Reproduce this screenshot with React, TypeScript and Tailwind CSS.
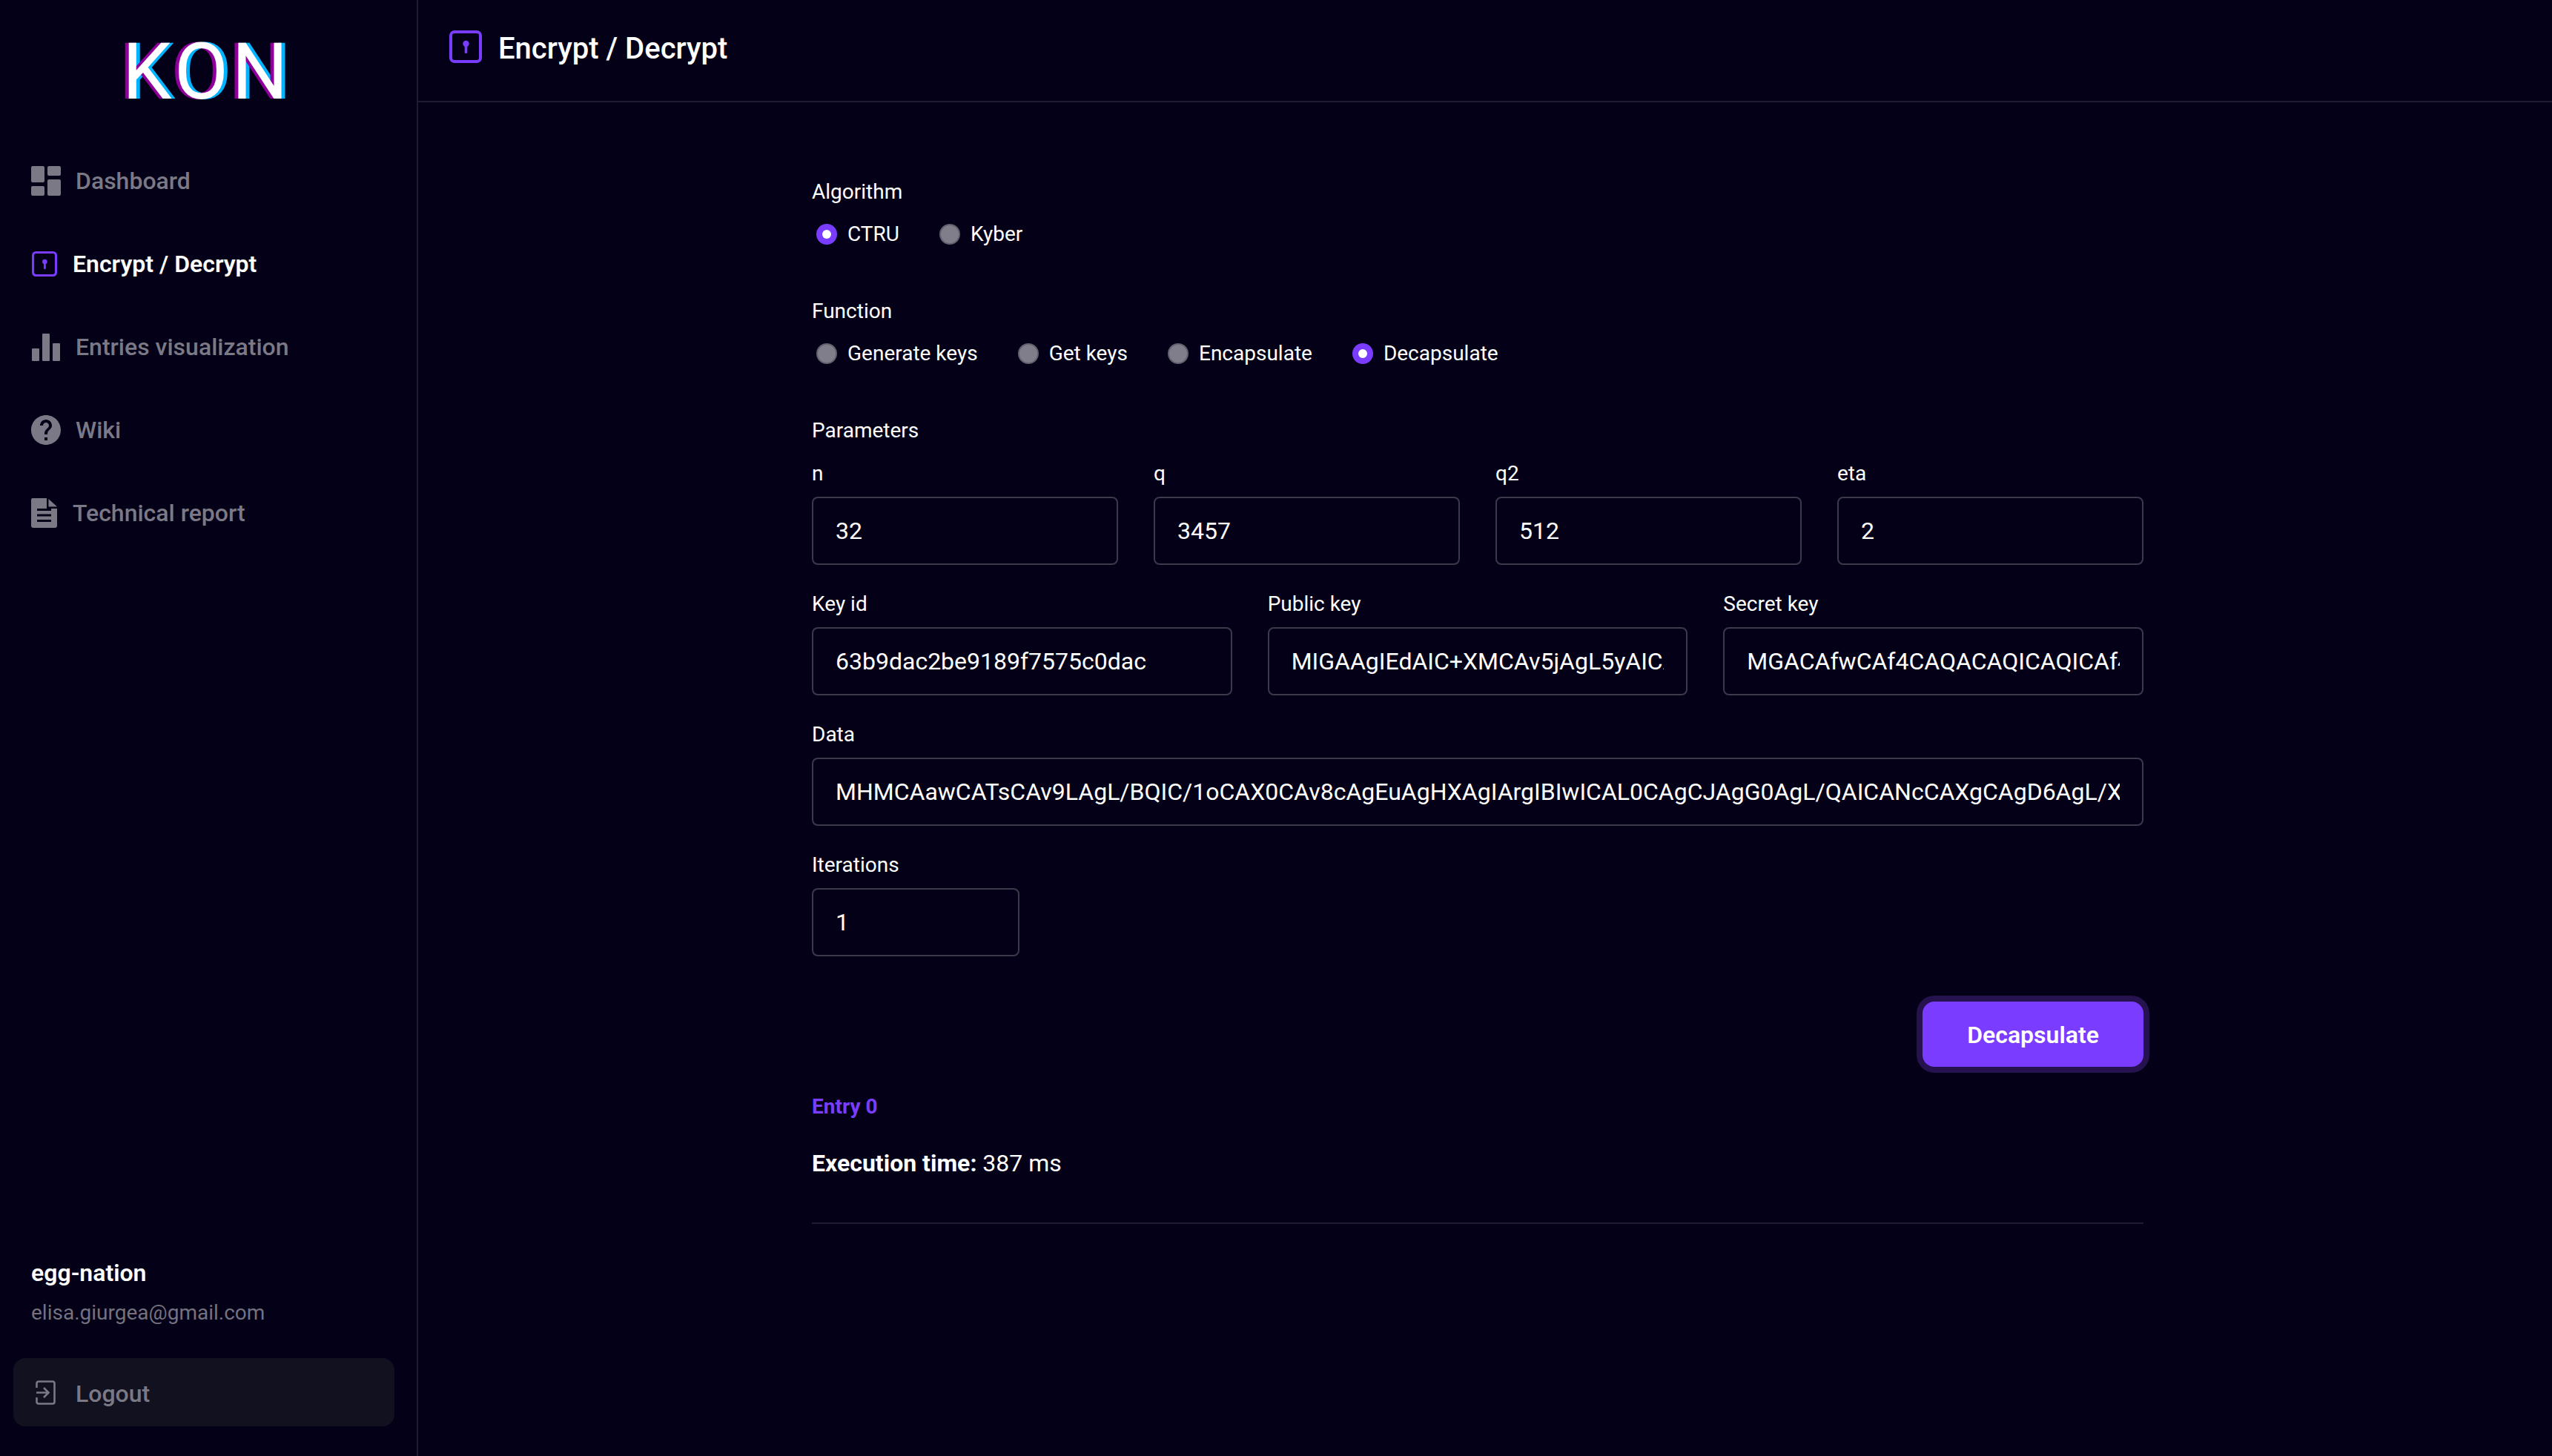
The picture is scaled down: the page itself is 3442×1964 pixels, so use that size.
const navItems = [
  { label: "Dashboard", icon: <DashboardIcon />, gap: "gap-[20px]", active: false },
  { label: "Encrypt / Decrypt", icon: <KeyholeIcon className="ml-px size-[34px]" />, gap: "gap-[21px]", active: true },
  { label: "Entries visualization", icon: <BarsIcon />, gap: "gap-[21px]", active: false },
  { label: "Wiki", icon: <HelpIcon />, gap: "gap-[20px]", active: false },
  { label: "Technical report", icon: <DocIcon />, gap: "gap-[21px]", active: false },
];

function DashboardIcon() {
  return (
    <svg viewBox="0 0 40 40" className="size-[40px] fill-[#7b7986]">
      <rect x="0" y="0" width="18" height="22" rx="2" />
      <rect x="0" y="27" width="18" height="13" rx="2" />
      <rect x="22" y="0" width="18" height="13" rx="2" />
      <rect x="22" y="18" width="18" height="22" rx="2" />
    </svg>
  );
}

function KeyholeIcon({ className }: { className: string }) {
  return (
    <svg viewBox="0 0 44 44" className={className}>
      <rect x="2" y="2" width="40" height="40" rx="5" fill="none" stroke="#7a3dff" strokeWidth="4" />
      <circle cx="22.5" cy="18" r="4.2" fill="#7a3dff" />
      <line x1="22.5" y1="18" x2="22.5" y2="29.5" stroke="#7a3dff" strokeWidth="3.6" strokeLinecap="round" />
    </svg>
  );
}

function BarsIcon() {
  return (
    <svg viewBox="0 0 38 37" className="ml-px h-[37px] w-[38px] fill-[#7b7986]">
      <rect x="0" y="20" width="10" height="17" rx="1" />
      <rect x="14" y="0" width="10" height="37" rx="1" />
      <rect x="28" y="13" width="10" height="24" rx="1" />
    </svg>
  );
}

function HelpIcon() {
  return (
    <svg viewBox="2 2 20 20" className="size-[40px] fill-[#7b7986]">
      <path d="M12 2C6.48 2 2 6.48 2 12s4.48 10 10 10 10-4.48 10-10S17.52 2 12 2zm1 17h-2v-2h2v2zm2.07-7.75l-.9.92C13.45 12.9 13 13.5 13 15h-2v-.5c0-1.1.45-2.1 1.17-2.83l1.24-1.26c.37-.36.59-.86.59-1.41 0-1.1-.9-2-2-2s-2 .9-2 2H8c0-2.21 1.79-4 4-4s4 1.79 4 4c0 .88-.36 1.68-.93 2.25z" />
    </svg>
  );
}

function DocIcon() {
  return (
    <svg viewBox="0 0 35 40" className="h-[40px] w-[35px] fill-[#7b7986]">
      <path
        fillRule="evenodd"
        d="M2 0H21V14H35V37a3 3 0 0 1-3 3H3a3 3 0 0 1-3-3V2a2 2 0 0 1 2-2zM8 14V17H27V14zM8 21.5V24.5H27V21.5zM8 29V32H27V29z"
      />
      <path d="M23.5 1L35 11.5H23.5z" />
    </svg>
  );
}

function LogoutIcon() {
  return (
    <svg viewBox="0 0 27 33" className="h-[33px] w-[27px] fill-none stroke-[#7b7986]" strokeWidth="2.6">
      <path d="M1.5 10V4a2.5 2.5 0 0 1 2.5-2.5H23a2.5 2.5 0 0 1 2.5 2.5V29a2.5 2.5 0 0 1-2.5 2.5H4A2.5 2.5 0 0 1 1.5 29V23" />
      <path d="M1 16.5H17M11 10l6.5 6.5L11 23" />
    </svg>
  );
}

function Radio({ label, checked }: { label: string; checked?: boolean }) {
  return (
    <div className="flex items-center gap-[14px]">
      {checked ? (
        <span className="flex size-[28px] items-center justify-center rounded-full bg-[#7a3dff]">
          <span className="size-[12px] rounded-full bg-white" />
        </span>
      ) : (
        <span className="size-[28px] rounded-full border-2 border-[#62616e] bg-[#7f7e8a]" />
      )}
      <span className="text-[28px] leading-[40px]">{label}</span>
    </div>
  );
}

function Field({ label, value, className }: { label: string; value: string; className?: string }) {
  return (
    <div className={className}>
      <label className="block text-[28px] leading-[44px]">{label}</label>
      <input
        readOnly
        value={value}
        className="mt-[9px] h-[92px] w-full rounded-[8px] border-2 border-[#3b3a4a] bg-transparent px-[30px] text-[32px] text-white outline-none"
      />
    </div>
  );
}

export default function App() {
  return (
    <div className="flex min-h-screen bg-[#030018] font-[Roboto,sans-serif] text-white">
      <aside className="flex h-[1964px] w-[564px] shrink-0 flex-col border-r-2 border-[#1e1c30]">
        <div className="h-[188px] pl-[165px] pt-[43px]">
          <span className="text-[106px] leading-[108px] tracking-[5px] [text-shadow:-5px_0_#8e0099,5px_0_#00b4ff]">KON</span>
        </div>
        <nav className="flex flex-col">
          {navItems.map((item) => (
            <div key={item.label} className={`flex h-[112px] items-center pl-[42px] ${item.gap}`}>
              {item.icon}
              <span className={`text-[32px] ${item.active ? "font-semibold text-white" : "font-medium text-[#7b7986]"}`}>
                {item.label}
              </span>
            </div>
          ))}
        </nav>
        <div className="mt-auto pb-[40px]">
          <div className="pl-[42px] text-[32px] font-semibold leading-[44px]">egg-nation</div>
          <div className="mt-[12px] pl-[42px] text-[28px] leading-[40px] text-[#74727f]">elisa.giurgea@gmail.com</div>
          <div className="mx-[18px] mt-[41px] flex h-[92px] w-[514px] items-center gap-[27px] rounded-[16px] bg-[#12111f] pl-[30px]">
            <LogoutIcon />
            <span className="pt-[3px] text-[32px] font-medium text-[#7b7986]">Logout</span>
          </div>
        </div>
      </aside>

      <main className="flex-1">
        <header className="flex h-[138px] items-start gap-[22px] border-b-2 border-[#1e1c30] pl-[42px] pt-[41px]">
          <KeyholeIcon className="size-[44px]" />
          <h1 className="text-[40px] font-medium leading-[50px]">Encrypt / Decrypt</h1>
        </header>

        <div className="ml-[531px] w-[1796px] pt-[101px]">
          <div className="text-[28px] leading-[40px]">Algorithm</div>
          <div className="mt-[17px] flex gap-[54px] pl-[6px]">
            <Radio label="CTRU" checked />
            <Radio label="Kyber" />
          </div>

          <div className="mt-[64px] text-[28px] leading-[40px]">Function</div>
          <div className="mt-[17px] flex gap-[54px] pl-[6px]">
            <Radio label="Generate keys" />
            <Radio label="Get keys" />
            <Radio label="Encapsulate" />
            <Radio label="Decapsulate" checked />
          </div>

          <div className="mt-[64px] text-[28px] leading-[40px]">Parameters</div>
          <div className="mt-[16px] grid grid-cols-4 gap-[48px]">
            <Field label="n" value="32" />
            <Field label="q" value="3457" />
            <Field label="q2" value="512" />
            <Field label="eta" value="2" />
          </div>

          <div className="mt-[31px] grid grid-cols-3 gap-[48px]">
            <Field label="Key id" value="63b9dac2be9189f7575c0dac" />
            <Field label="Public key" value="MIGAAgIEdAIC+XMCAv5jAgL5yAICAPkCAgD3AgIA" />
            <Field label="Secret key" value="MGACAfwCAf4CAQACAQICAQICAf4CAQACAQICAQAC" />
          </div>

          <Field
            className="mt-[31px]"
            label="Data"
            value="MHMCAawCATsCAv9LAgL/BQIC/1oCAX0CAv8cAgEuAgHXAgIArgIBIwICAL0CAgCJAgG0AgL/QAICANcCAXgCAgD6AgL/XwICAK4CAQ"
          />
          <Field className="mt-[31px] w-[280px]" label="Iterations" value="1" />

          <div className="mt-[61px] flex justify-end">
            <button className="h-[88px] w-[298px] rounded-[16px] bg-[#7a3dff] pt-px text-[32px] font-semibold text-white shadow-[0_0_0_8px_#26124f]">
              Decapsulate
            </button>
          </div>

          <div className="mt-[34px] text-[28px] font-bold leading-[40px] text-[#7a3dff]">Entry 0</div>
          <div className="mt-[34px] text-[32px] leading-[44px]">
            <span className="font-bold">Execution time:</span> 387 ms
          </div>
          <div className="mt-[58px] h-[2px] bg-[#1e1c30]" />
        </div>
      </main>
    </div>
  );
}
